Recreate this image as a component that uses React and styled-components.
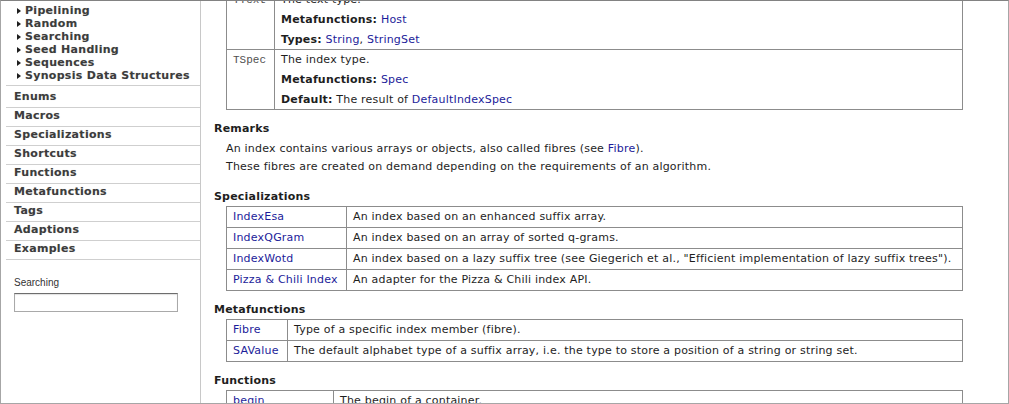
import React from 'react';
import styled, { createGlobalStyle } from 'styled-components';

const GlobalStyle = createGlobalStyle`
  html, body {
    margin: 0;
    padding: 0;
    background: #fff;
  }
  body {
    font-family: "DejaVu Sans", Verdana, sans-serif;
  }
`;

const Frame = styled.div`
  width: 1009px;
  height: 404px;
  box-sizing: border-box;
  border: 1px solid #a6a6a6;
  border-top-color: #828282;
  display: flex;
  overflow: hidden;
  background: #fff;
`;

const Sidebar = styled.nav`
  width: 199px;
  flex: none;
  border-right: 1px solid #c8c8c8;
  display: flex;
  flex-direction: column;
`;

const CategoryList = styled.ul`
  list-style: none;
  margin: 0;
  padding: 3px 0 0 16px;
`;

const Category = styled.li`
  display: flex;
  align-items: center;
  height: 13px;
  font-size: 11px;
  font-weight: bold;
  letter-spacing: 0.3px;
  color: #3c3c3c;
  text-shadow: 0 0 1px rgba(0, 0, 0, 0.18);
  white-space: nowrap;

  &::before {
    content: '';
    width: 0;
    height: 0;
    border-left: 4px solid #1e1e1e;
    border-top: 3.5px solid transparent;
    border-bottom: 3.5px solid transparent;
    margin-right: 4px;
  }
`;

const Sections = styled.ul`
  list-style: none;
  margin: 3px 0 0 5px;
  padding: 0;
  border-bottom: 1px solid #cfcfcf;
`;

const Section = styled.li`
  border-top: 1px solid #cfcfcf;
  padding: ${p => (p.$first ? '4px' : '1px')} 0 3px 8px;
  line-height: 14px;
  font-size: 11px;
  font-weight: bold;
  letter-spacing: 0.3px;
  color: #3c3c3c;
  text-shadow: 0 0 1px rgba(0, 0, 0, 0.18);
`;

const Search = styled.div`
  margin: 17px 0 0 13px;
  display: flex;
  flex-direction: column;
  gap: 4px;
`;

const SearchLabel = styled.label`
  font-family: "Liberation Sans", Arial, sans-serif;
  font-size: 10px;
  line-height: 12px;
  color: #333;
`;

const SearchInput = styled.input`
  width: 164px;
  height: 19px;
  box-sizing: border-box;
  margin: 0;
  border: 1px solid #a9a9a9;
  border-top-color: #6d6d6d;
  box-shadow: inset 0 1px 1px rgba(0, 0, 0, 0.12);
  background: #fff;
`;

const Main = styled.main`
  flex: 1;
  min-width: 0;
  padding: 0 45px 0 13px;
  font-size: 11px;
  letter-spacing: 0.2px;
  color: #1e1e1e;
`;

const Content = styled.div`
  margin-top: -12px;
`;

const Heading = styled.h3`
  margin: 12px 0 2px;
  font-size: 11px;
  line-height: 14px;
  font-weight: bold;
  color: #1e1e1e;
`;

const Remarks = styled.div`
  padding: 4px 0 4px 12px;
`;

const Remark = styled.p`
  margin: 0;
  line-height: 14px;

  & + & {
    margin-top: 4px;
  }
`;

const Table = styled.table`
  width: calc(100% - 12px);
  margin-left: 12px;
  border-collapse: collapse;
  table-layout: fixed;
  border: 1px solid #8c8c8c;
`;

const Cell = styled.td`
  border: 1px solid #8c8c8c;
  padding: ${p => (p.$tight ? '3px 6px 2px' : '3px 6px')};
  vertical-align: top;
  line-height: 14px;
`;

const Param = styled.code`
  font-family: "Liberation Mono", "Courier New", monospace;
  font-size: 11px;
  letter-spacing: 0;
  color: #505050;
`;

const Line = styled.p`
  margin: 0 0 6px;
  line-height: 14px;

  &:last-child {
    margin-bottom: 0;
  }
`;

const Link = styled.a`
  color: #1c1c9a;
  text-decoration: none;
`;

const categories = [
  'Pipelining',
  'Random',
  'Searching',
  'Seed Handling',
  'Sequences',
  'Synopsis Data Structures',
];

const sections = [
  'Enums',
  'Macros',
  'Specializations',
  'Shortcuts',
  'Functions',
  'Metafunctions',
  'Tags',
  'Adaptions',
  'Examples',
];

const specializations = [
  ['IndexEsa', 'An index based on an enhanced suffix array.'],
  ['IndexQGram', 'An index based on an array of sorted q-grams.'],
  ['IndexWotd', 'An index based on a lazy suffix tree (see Giegerich et al., "Efficient implementation of lazy suffix trees").'],
  ['Pizza & Chili Index', 'An adapter for the Pizza & Chili index API.'],
];

const metafunctions = [
  ['Fibre', 'Type of a specific index member (fibre).'],
  ['SAValue', 'The default alphabet type of a suffix array, i.e. the type to store a position of a string or string set.'],
];

const functions = [
  ['begin', 'The begin of a container.'],
  ['end', 'The end of a container.'],
];

const LinkTable = ({ keyWidth, rows }) => (
  <Table>
    <colgroup>
      <col style={{ width: keyWidth }} />
      <col />
    </colgroup>
    <tbody>
      {rows.map(([name, text]) => (
        <tr key={name}>
          <Cell><Link href="#">{name}</Link></Cell>
          <Cell>{text}</Cell>
        </tr>
      ))}
    </tbody>
  </Table>
);

const App = () => (
  <>
    <GlobalStyle />
    <Frame>
      <Sidebar>
        <CategoryList>
          {categories.map(c => <Category key={c}>{c}</Category>)}
        </CategoryList>
        <Sections>
          {sections.map((s, i) => <Section key={s} $first={i === 0}>{s}</Section>)}
        </Sections>
        <Search>
          <SearchLabel htmlFor="search">Searching</SearchLabel>
          <SearchInput id="search" type="text" />
        </Search>
      </Sidebar>

      <Main>
        <Content>
          <Table>
            <colgroup>
              <col style={{ width: 48 }} />
              <col />
            </colgroup>
            <tbody>
              <tr>
                <Cell $tight><Param>TText</Param></Cell>
                <Cell $tight>
                  <Line>The text type.</Line>
                  <Line><b>Metafunctions:</b> <Link href="#">Host</Link></Line>
                  <Line><b>Types:</b> <Link href="#">String</Link>, <Link href="#">StringSet</Link></Line>
                </Cell>
              </tr>
              <tr>
                <Cell $tight><Param>TSpec</Param></Cell>
                <Cell $tight>
                  <Line>The index type.</Line>
                  <Line><b>Metafunctions:</b> <Link href="#">Spec</Link></Line>
                  <Line><b>Default:</b> The result of <Link href="#">DefaultIndexSpec</Link></Line>
                </Cell>
              </tr>
            </tbody>
          </Table>

          <Heading>Remarks</Heading>
          <Remarks>
            <Remark>An index contains various arrays or objects, also called fibres (see <Link href="#">Fibre</Link>).</Remark>
            <Remark>These fibres are created on demand depending on the requirements of an algorithm.</Remark>
          </Remarks>

          <Heading>Specializations</Heading>
          <LinkTable keyWidth={120} rows={specializations} />

          <Heading>Metafunctions</Heading>
          <LinkTable keyWidth={61} rows={metafunctions} />

          <Heading>Functions</Heading>
          <LinkTable keyWidth={107} rows={functions} />
        </Content>
      </Main>
    </Frame>
  </>
);

export default App;
